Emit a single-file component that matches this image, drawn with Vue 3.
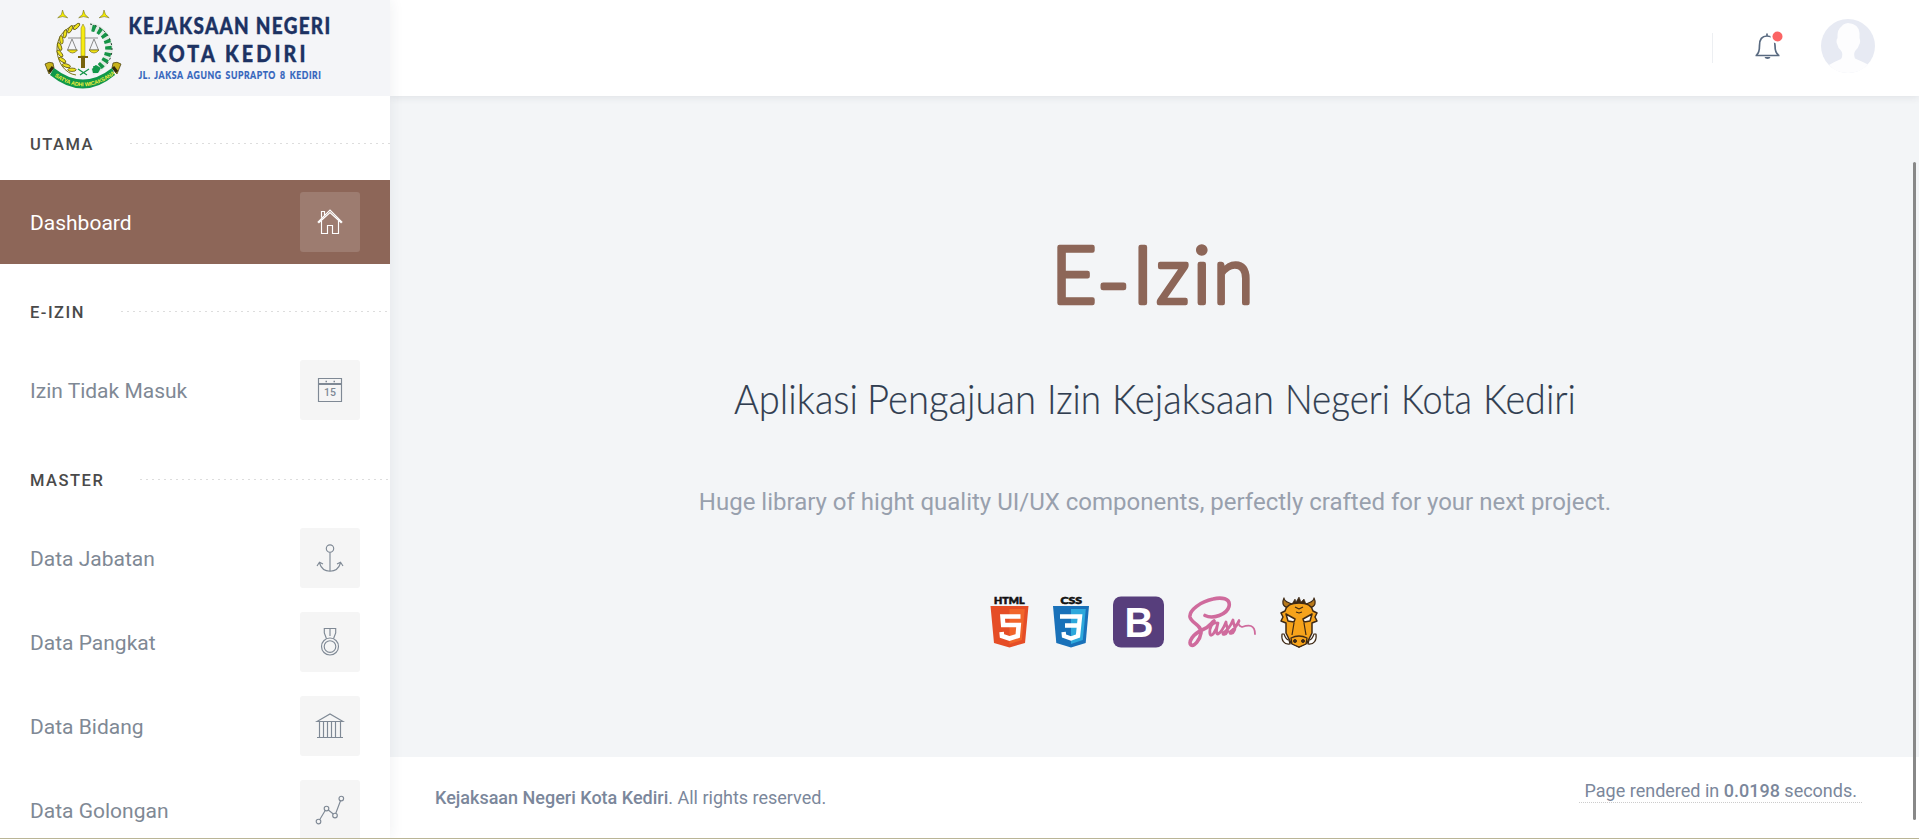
<script setup>
const sections = [
  { title: 'UTAMA', items: [{ label: 'Dashboard', icon: 'home', active: true }] },
  { title: 'E-IZIN', items: [{ label: 'Izin Tidak Masuk', icon: 'calendar' }] },
  {
    title: 'MASTER',
    items: [
      { label: 'Data Jabatan', icon: 'anchor' },
      { label: 'Data Pangkat', icon: 'medal' },
      { label: 'Data Bidang', icon: 'bank' },
      { label: 'Data Golongan', icon: 'graph' },
    ],
  },
]
const title = [
  { t: 'E', x: 1050.5, y: 302.5, s: 0.98 },
  { t: '-', x: 1096, y: 310, s: 1.12 },
  { t: 'I', x: 1131.5, y: 302.5, s: 1 },
  { t: 'z', x: 1155.5, y: 302.5, s: 0.93 },
  { t: 'i', x: 1192, y: 302.5, s: 1 },
  { t: 'n', x: 1212.5, y: 302.5, s: 0.91 },
]
const subtitle = [
  { t: 'Aplikasi', x: -1, w: 124 },
  { t: 'Pengajuan', x: 132, w: 169 },
  { t: 'Izin', x: 312, w: 54 },
  { t: 'Kejaksaan', x: 377, w: 162 },
  { t: 'Negeri', x: 550, w: 105 },
  { t: 'Kota', x: 666, w: 71 },
  { t: 'Kediri', x: 748, w: 93 },
]
const leaves = [-165, -148, -131, -114, -97, -80, -63, -46, -29]
</script>

<template>
  <div class="page">
    <aside class="sidebar">
      <div class="brand">
        <svg class="emblem" width="82" height="84" viewBox="42 6 82 84">
          <g fill="#f4ec00" stroke="#5f5b10" stroke-width=".5">
            <path v-for="x in [62.500, 83.500, 104]" :key="x" :d="`M${x} 10l1.500 4.500 3.700 3.300-5-1.200-5 1.200 3.700-3.300z`" />
          </g>
          <path d="M77 25C59 28 51 48 62 66q6 8 14 9" fill="none" stroke="#7c7313" stroke-width="1" />
          <g transform="translate(83 49)">
            <ellipse v-for="a in leaves" :key="a" cx="23.500" cy="0" rx="4.200" ry="1.700" fill="#eee21c" stroke="#5d5512" stroke-width=".8" :transform="`rotate(${a - 77}) rotate(62 23.500 0)`" />
          </g>
          <path d="M90 26C108 30 115 49 104 63q-4 6-12 9" fill="none" stroke="#e3ebe5" stroke-width="7" />
          <path d="M92 28C108 32 113 49 104 62q-4 6-12 8" fill="none" stroke="#159447" stroke-width="6.500" stroke-dasharray="3.500 3" />
          <path d="M90 24C110 28 118 49 107 64" fill="none" stroke="#2b4635" stroke-width="1" stroke-dasharray="2 3" />
          <path d="M68 38h30M72 39l-4.500 11h9zM94 39l-4.500 11h9z" fill="none" stroke="#8b8b8b" stroke-width="1" />
          <path d="M67.500 50h10q-2 3-5 3t-5-3zM89 50h10q-2 3-5 3t-5-3z" fill="#f2e413" stroke="#5d5512" stroke-width=".6" />
          <path d="M83 24l2 4v28h-4V28z" fill="#f7ec13" stroke="#79721c" stroke-width=".5" />
          <path d="M78 56h10v2h-3v10h-4V58h-3z" fill="#78640e" />
          <path d="M78 69l9 6M89 69l-9 6" stroke="#159447" stroke-width="1.300" />
          <path d="M92 69l4-4 5 3-3 5h-5z" fill="#10984a" />
          <path d="M45 64q4-3 8-1l1 5-5 6zM121 64q-4-3-8-1l-1 5 5 6z" fill="#c8b31c" stroke="#3f360c" stroke-width=".7" />
          <path d="M49 72l4-5M117 72l-4-5" stroke="#302a0b" stroke-width="3" />
          <path d="M54 68Q83 91 112 68L115 75Q83 102 50 75z" fill="#10984a" />
          <path id="motto-arc" d="M52 74.500Q83 98 114 74.500" fill="none" />
          <text class="motto"><textPath href="#motto-arc" startOffset="3" textLength="66">SATYA ADHI WICAKSANA</textPath></text>
        </svg>
        <svg class="brand-text" width="240" height="86" viewBox="127 5 240 86">
          <text x="128.500" y="34" textLength="203" lengthAdjust="spacingAndGlyphs" class="bt-main">KEJAKSAAN NEGERI</text>
          <text x="152.500" y="61.500" textLength="156" lengthAdjust="spacingAndGlyphs" class="bt-main wide">KOTA KEDIRI</text>
          <text x="138.500" y="79" textLength="183" lengthAdjust="spacingAndGlyphs" class="bt-sub">JL. JAKSA AGUNG SUPRAPTO 8 KEDIRI</text>
        </svg>
      </div>
      <nav class="menu">
        <template v-for="s in sections" :key="s.title">
          <div class="section"><span>{{ s.title }}</span><i class="dots"></i></div>
          <a v-for="it in s.items" :key="it.label" class="item" :class="{ active: it.active }">
            <span class="label">{{ it.label }}</span>
            <span class="tile">
              <svg width="30" height="30" viewBox="0 0 30 30" fill="none" stroke="currentColor" stroke-width="1.150">
                <template v-if="it.icon === 'home'">
                  <path d="M2.700 15.300L15 3l12.300 12.300M3.500 16L15 5.500 26.500 16M6.500 10.500v-6h3v3.500" />
                  <path d="M6.500 14v12.500h6v-8h5v8h6V14" />
                </template>
                <template v-else-if="it.icon === 'calendar'">
                  <path d="M3.500 3.500h23v23h-23zM3.500 8.500h23M3.500 9.500h23" />
                  <path d="M10.500 6.500h1.500M18.500 6.500h1.500" stroke-width="1.600" />
                  <text x="9" y="21.200" textLength="12" class="day">15</text>
                </template>
                <template v-else-if="it.icon === 'anchor'">
                  <circle cx="15" cy="5.500" r="3.700" />
                  <path d="M15 9.200v19M4.500 20C6 25 10 28.200 15 28.200S24 25 25.500 20M2 23l2.500-3.700L8 21M28 23l-2.500-3.700L22 21" />
                </template>
                <template v-else-if="it.icon === 'medal'">
                  <circle cx="15" cy="19.500" r="8.500" /><circle cx="15" cy="19.500" r="5.800" />
                  <path d="M11.500 11.700L9.300 6V1.500h11.400V6l-2.200 5.700M15 1.500V9" />
                </template>
                <template v-else-if="it.icon === 'bank'">
                  <path d="M2 10.500L15 3l13 7.500zM2 26.500h26M4.500 11v15M8.500 11v15M12.500 11v15M16.500 11v15M20.500 11v15M25.500 11v15" />
                </template>
                <template v-else>
                  <circle cx="3.500" cy="26.500" r="2.300" /><circle cx="11.500" cy="13.500" r="2.300" />
                  <circle cx="20" cy="20.500" r="2.300" /><circle cx="26.300" cy="3.500" r="2.300" />
                  <path d="M4.800 24.500l5.400-9M13.300 15l5 4M20.800 18.300l4.700-12.600" />
                </template>
              </svg>
            </span>
          </a>
        </template>
      </nav>
    </aside>

    <div class="content">
      <header class="topbar">
        <i class="divider"></i>
        <svg class="bell" width="32" height="34" viewBox="0 0 32 34">
          <path d="M3.500 25.500h24M4.500 25q3-2 3-9.500C7.500 9 10 6 15 6s8 3 8 9.500q0 7.500 3.500 9.500M15 6V3.500" fill="none" stroke="#596a80" stroke-width="1.700" />
          <path d="M12.500 27h6q-.500 2-3 2t-3-2z" fill="#596a80" />
          <circle cx="25.500" cy="6.500" r="7" fill="#fff" /><circle cx="25.500" cy="6.500" r="5" fill="#fb6464" />
        </svg>
        <svg class="avatar" width="54" height="54" viewBox="0 0 54 54">
          <circle cx="27" cy="27" r="27" fill="#e7eaf3" />
          <path d="M8 46Q15 42 20 40q3-5-.5-9-2.500-2-3-5-2-4 0-7-.5-9 4.500-12 1-2 6-3 11 1 11.500 10v5q1.500 4-.5 7-1 4-3.500 5.500-2.500 3-.5 8 7 3 13 6Q39 54 27 54T8 46z" fill="#fdfdfe" />
        </svg>
      </header>

      <main class="hero">
        <h1>
          <svg width="240" height="120" viewBox="1034 213 240 120">
            <text v-for="g in title" :key="g.x" class="title" :transform="`translate(${g.x} ${g.y}) scale(${g.s} 1)`">{{ g.t }}</text>
          </svg>
        </h1>
        <h2>
          <svg width="882" height="70" viewBox="-21 -10 882 70">
            <text v-for="w in subtitle" :key="w.t" :x="w.x" y="37" :textLength="w.w" lengthAdjust="spacingAndGlyphs" class="sub">{{ w.t }}</text>
          </svg>
        </h2>
        <p>Huge library of hight quality UI/UX components, perfectly crafted for your next project.</p>
        <div class="tech">
          <svg width="39" height="52" viewBox="0 0 39 52">
            <text x="4" y="7.500" textLength="30.500" lengthAdjust="spacingAndGlyphs" class="tag">HTML</text>
            <path d="M.5 10h38L35 47l-15.500 4.500L4 47z" fill="#e54d26" /><path d="M19.500 13h15.300l-3 31-12.300 4z" fill="#f1652a" />
            <path d="M30.500 20.500h-18l.7 8.500h15.500l-1 11-8.200 2.500-7.500-2.500-.4-4" fill="none" stroke="#fff" stroke-width="4.600" />
          </svg>
          <svg width="36" height="52" viewBox="0 0 36 52">
            <text x="7.500" y="7.500" textLength="21.500" lengthAdjust="spacingAndGlyphs" class="tag">CSS</text>
            <path d="M0 10h36l-3.300 37L18 51.500 3.300 47z" fill="#1971b9" /><path d="M18 13h14.800l-3 31L18 48z" fill="#2da8dc" />
            <path d="M7 20.500h20l-2 19.500-7 2.500-7-2.500-.4-4M12 29.500h14" fill="none" stroke="#fff" stroke-width="4.400" />
          </svg>
          <svg width="51" height="52" viewBox="0 0 51 52">
            <rect y=".5" width="51" height="51" rx="8" fill="#573e7c" />
            <text x="11.500" y="41" textLength="29" lengthAdjust="spacingAndGlyphs" class="bs">B</text>
          </svg>
          <svg width="68" height="52" viewBox="0 0 68 52" fill="none" stroke="#cf6b9d" stroke-linecap="round" stroke-linejoin="round">
            <path d="M17 19.500c8 4 22-1 24-9C43 2 33 1 25 3 13 5.500 1 14 2 21c1 6 12 8 11 16-1 7-7 14-10 12-3-3 2-11 11-15 8-3 9-7 12-9" stroke-width="3.600" />
            <path d="M29 27c-5-1-8 5-7 11 1 4 6-2 8-11-2 8-2 11 0 11 4-2 6-7 8-12 0 4 3 7 1 10-1 3-5 3-4 1 5-3 8-8 10-13 0 5 4 7 1 11-1 3-5 3-4 1 5-3 7-7 9-11" stroke-width="2.800" />
            <path d="M51 24c-2 3 0 6 3 7 3-1 6-2 9-1q4 1.500 4 8" stroke-width="1.800" />
          </svg>
          <svg width="39" height="52" viewBox="0 0 39 52" stroke="#3e2a16" stroke-linejoin="round">
            <path d="M8 12C2 10 2 6 4 2c0 4 4 4 8 6zM30 12c6-2 6-6 4-10 0 4-4 4-8 6z" fill="#b7791b" stroke-width="1.200" />
            <path d="M12 8l3-5 1 3 3-5 2 5 3-3 2 5z" fill="#3e2a16" stroke-width=".6" />
            <path d="M19 7C11 7 6 10 5 15l-4 2 2 4-2 4 5 2v10l5 10 8 4 8-4 5-10V27l5-2-2-4 2-4-4-2C32 10 27 7 19 7z" fill="#f6a31b" stroke-width="1.500" />
            <path d="M6 18l9 5-1 3-6-1zM32 18l-9 5 1 3 6-1z" fill="#fff" stroke-width="1.500" />
            <path d="M15 11l4 2 4-2M16 16l3 1 3-1M14 27l-2 12M24 27l2 12" fill="none" stroke-width="1.200" />
            <path d="M2 38c-1 6 2 11 8 10l-1-4c-3 0-4-3-5-6zM36 38c1 6-2 11-8 10l1-4c3 0 4-3 5-6z" fill="#fff" stroke-width="1.200" />
            <path d="M11 42q8-4 16 0l-1 6-7 3-7-3z" fill="#f6a31b" stroke-width="1.300" />
            <circle cx="15" cy="45" r="1.500" fill="#3e2a16" /><circle cx="23" cy="45" r="1.500" fill="#3e2a16" />
          </svg>
        </div>
      </main>

      <footer class="foot">
        <span><b>Kejaksaan Negeri Kota Kediri</b>. All rights reserved.</span>
        <span class="rendered">Page rendered in <b>0.0198</b> seconds.</span>
      </footer>
    </div>
    <i class="scroll"></i>
  </div>
</template>

<style>
body { overflow: hidden; }
</style>

<style scoped>
.page { position: relative; display: flex; box-sizing: border-box; width: 1919px; height: 839px; overflow: hidden; border-bottom: 1px solid #bab596; background: #f3f5f7; font-family: Roboto, "Liberation Sans", sans-serif; }
.sidebar { position: relative; z-index: 2; flex: none; width: 390px; background: #fff; box-shadow: 0 0 14px rgba(40, 50, 70, .08); }
.brand { display: flex; height: 96px; background: #f4f5f8; }
.emblem { flex: none; margin: 6px 0 0 42px; }
.brand-text { flex: none; margin: 5px 0 0 3px; }
.motto { font: 700 5.500px "Liberation Sans", sans-serif; fill: #f3ef3a; }
.bt-main { font: 900 22px Lato, sans-serif; letter-spacing: 1.500px; fill: #1c3263; stroke: #1c3263; stroke-width: .4px; }
.wide { letter-spacing: 3.500px; }
.bt-sub { font: 900 12px Lato, sans-serif; letter-spacing: .8px; word-spacing: 2px; fill: #3465bd; stroke: #3465bd; stroke-width: .2px; }
.section { display: flex; align-items: center; box-sizing: border-box; height: 84px; padding: 12px 0 0 30px; color: #4a4a4a; font-size: 16.500px; font-weight: 500; letter-spacing: 1.500px; }
.dots { flex: 1; height: 1px; margin: 0 0 2px 36px; background: repeating-linear-gradient(90deg, #ddd 0 2px, transparent 2px 6px); }
.item { display: flex; align-items: center; justify-content: space-between; box-sizing: border-box; height: 84px; padding: 0 30px; color: #7f8995; font-size: 21px; }
.label { padding-top: 2px; }
.tile { display: flex; align-items: center; justify-content: center; width: 60px; height: 60px; border-radius: 3px; background: #f5f5f5; }
.day { font: 500 10.500px Roboto, sans-serif; fill: currentColor; stroke: none; }
.active { background: #8d6658; color: #fff; }
.active .tile { background: #9d7c70; }
.content { display: flex; flex: 1; flex-direction: column; }
.topbar { position: relative; display: flex; flex: none; justify-content: flex-end; box-sizing: border-box; height: 96px; padding-right: 44px; background: #fff; box-shadow: 0 1px 8px rgba(40, 50, 70, .1); }
.divider { width: 1px; height: 30px; margin: 33px 39px 0 0; background: #edeff2; }
.bell { margin: 30px 37px 0 0; }
.avatar { margin-top: 19px; }
.hero { display: flex; flex: 1; flex-direction: column; align-items: center; }
h1, h2, p { margin: 0; }
svg { display: block; }
h1 { margin-top: 117px; }
h2 { margin-top: 34px; }
.title { font: 300 79px Lato, sans-serif; fill: #8d6658; stroke: #8d6658; stroke-width: 4.600px; stroke-linejoin: round; }
.sub { font: 300 42px Lato, sans-serif; fill: #303d50; stroke: #303d50; stroke-width: .2px; }
p { margin-top: 50px; padding-left: 1px; color: #98a0ad; font-size: 24px; line-height: 30px; white-space: nowrap; }
.tech { display: flex; gap: 24px; margin-top: 79px; }
.tag { font: 900 9.500px Lato, sans-serif; fill: #111; stroke: #111; stroke-width: .6px; }
.bs { font: 700 42px "Liberation Sans", sans-serif; fill: #fff; }
.foot { display: flex; justify-content: space-between; align-items: flex-start; box-sizing: border-box; height: 81px; padding: 30px 57px 0 45px; background: #fff; color: #7b879b; font-size: 18px; line-height: 22px; }
.foot b { font-weight: 500; }
.rendered { margin-top: -7px; padding: 0 5px 0 6px; border-bottom: 1px dotted #ccc; }
.scroll { position: absolute; z-index: 3; right: 3px; top: 162px; width: 3px; height: 658px; border-radius: 2px; background: #888; }
</style>
